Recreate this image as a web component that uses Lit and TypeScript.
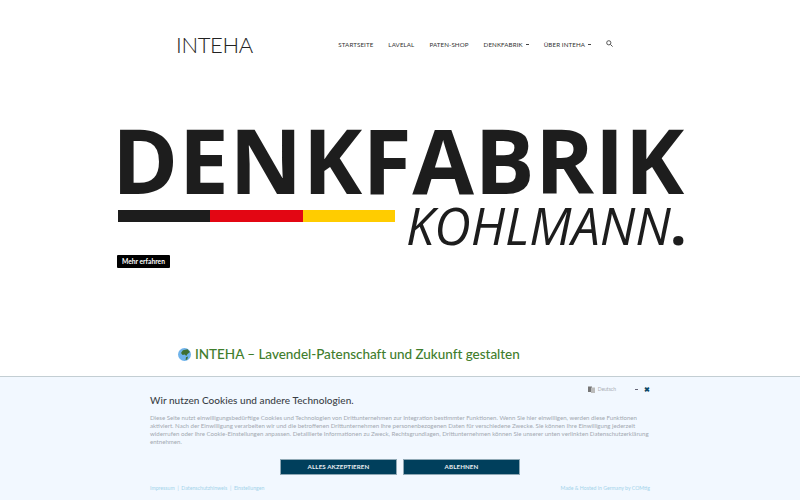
import { LitElement, html, css } from "lit";
import { customElement } from "lit/decorators.js";

@customElement("app-root")
export class AppRoot extends LitElement {
  static styles = css`
    :host { display: block; width: 800px; height: 500px; overflow: hidden; position: relative; background: #fff; font-family: Lato, "Open Sans", sans-serif; color: #333; }
    .header { display: flex; align-items: center; justify-content: space-between; height: 90px; padding: 0 187px 0 176px; box-sizing: border-box; }
    .brand { font-size: 22px; font-weight: 300; color: #222; letter-spacing: -0.35px; line-height: 1; }
    nav { display: flex; align-items: center; gap: 15px; font-size: 6.2px; color: #333; letter-spacing: 0.1px; text-transform: uppercase; margin-top: -2px; }
    nav .caret { display: inline-block; width: 3px; height: 1px; background: #444; margin-left: 3px; vertical-align: middle; }
    nav svg { display: block; margin-top: -1px; }
    .hero { padding: 27px 0 0 118px; height: 256px; box-sizing: border-box; display: flex; flex-direction: column; }
    .word { font-family: "Open Sans", sans-serif; font-weight: 700; font-size: 89.5px; line-height: 84px; color: #1d1d1d; white-space: nowrap; margin-left: -6px; letter-spacing: 0.5px; }
    .row { display: flex; align-items: flex-start; margin-top: 3px; }
    .flag { display: flex; width: 277px; height: 12px; margin-top: 6px; }
    .flag i { flex: 1; }
    .flag .k { background: #1d1d1d; }
    .flag .r { background: #e30613; }
    .flag .g { background: #ffcc00; }
    .sub { font-family: "Open Sans", sans-serif; font-weight: 400; font-style: italic; font-size: 50.5px; line-height: 50px; margin-top: -3px; color: #1d1d1d; margin-left: 11px; white-space: nowrap; }
    .sub b { font-weight: 800; font-style: normal; }
    .more { align-self: flex-start; margin: 4px 0 0 -1px; background: #000; color: #fff; font-size: 6.7px; font-weight: 700; padding: 0 5px; height: 13px; line-height: 13px; border-radius: 1px; }
    .headline { margin-left: 178px; display: flex; align-items: center; gap: 4px; font-size: 13.5px; font-weight: 500; color: #3f7d2c; white-space: nowrap; letter-spacing: -0.03px; line-height: 16px; }
    .banner { position: absolute; left: 0; right: 0; top: 376px; bottom: 0; background: #f2f8ff; border-top: 1px solid #c3ced3; box-sizing: border-box; padding: 16px 150px 0; }
    .top { display: flex; justify-content: space-between; align-items: flex-start; }
    h2 { margin: 0; font-size: 10px; font-weight: 500; color: #3a3f46; line-height: 14px; letter-spacing: 0.05px; }
    .lang { display: flex; align-items: center; font-size: 5px; color: #a9aeb4; margin-top: -8px; }
    .lang svg { margin-right: 3px; }
    .lang .dash { width: 3px; height: 1px; background: #667; margin: 0 6px 0 19px; }
    .lang .x { color: #0f4a68; font-size: 7px; font-weight: 900; line-height: 8px; }
    p { margin: 6.5px 0 0; font-size: 6.1px; line-height: 8.3px; color: #a3a9b1; white-space: nowrap; }
    .btns { display: flex; justify-content: center; gap: 6px; margin-top: 12.5px; }
    .btns div { width: 117px; height: 16px; background: #003f5c; border: 1px solid #8fa8b5; box-sizing: border-box; color: #e8eef2; font-size: 6.2px; font-weight: 700; line-height: 14px; text-align: center; letter-spacing: 0.1px; }
    .foot { display: flex; justify-content: space-between; margin-top: 9px; font-size: 5.2px; color: #a3d3ea; line-height: 8px; }
  `;

  render() {
    return html`
      <div class="header">
        <div class="brand">INTEHA</div>
        <nav>
          <span>Startseite</span><span>Lavelal</span><span>Paten-Shop</span>
          <span>Denkfabrik<i class="caret"></i></span>
          <span>Über Inteha<i class="caret"></i></span>
          <svg width="7" height="7" viewBox="0 0 7 7" fill="none" stroke="#555" stroke-width="1"><circle cx="2.8" cy="2.8" r="2.1"/><path d="M4.4 4.4 6.6 6.6"/></svg>
        </nav>
      </div>
      <div class="hero">
        <div class="word">DENKFABRIK</div>
        <div class="row">
          <div class="flag"><i class="k"></i><i class="r"></i><i class="g"></i></div>
          <div class="sub">KOHLMANN<b>.</b></div>
        </div>
        <div class="more">Mehr erfahren</div>
      </div>
      <div class="headline">
        <svg width="13" height="13" viewBox="0 0 13 13"><circle cx="6.5" cy="6.5" r="6.5" fill="#6fb3ea"/><path d="M5 2.2 9.5 1.2 12 4 9.5 6 8.2 8 6.8 6.6 4.6 7 3 5 4 3.4Z M8 9.2 10 8.4 9.2 11.4 7.6 12Z" fill="#3f6f30"/></svg>
        <span>INTEHA – Lavendel-Patenschaft und Zukunft gestalten</span>
      </div>
      <div class="banner">
        <div class="top">
          <h2>Wir nutzen Cookies und andere Technologien.</h2>
          <div class="lang">
            <svg width="7" height="7" viewBox="0 0 7 7"><rect x="0" y="0.5" width="4" height="5.5" fill="#777"/><rect x="3" y="1.5" width="4" height="5.5" fill="#bbb"/></svg>
            <span>Deutsch</span><i class="dash"></i><span class="x">✖</span>
          </div>
        </div>
        <p>Diese Seite nutzt einwilligungsbedürftige Cookies und Technologien von Drittunternehmen zur Integration bestimmter Funktionen. Wenn Sie hier einwilligen, werden diese Funktionen<br>aktiviert. Nach der Einwilligung verarbeiten wir und die betroffenen Drittunternehmen Ihre personenbezogenen Daten für verschiedene Zwecke. Sie können Ihre Einwilligung jederzeit<br>widerrufen oder Ihre Cookie-Einstellungen anpassen. Detaillierte Informationen zu Zweck, Rechtsgrundlagen, Drittunternehmen können Sie unserer unten verlinkten Datenschutzerklärung<br>entnehmen.</p>
        <div class="btns"><div>ALLES AKZEPTIEREN</div><div>ABLEHNEN</div></div>
        <div class="foot"><span>Impressum &nbsp;|&nbsp; Datenschutzhinweis &nbsp;|&nbsp; Einstellungen</span><span>Made &amp; Hosted in Germany by COMtig</span></div>
      </div>
    `;
  }
}
